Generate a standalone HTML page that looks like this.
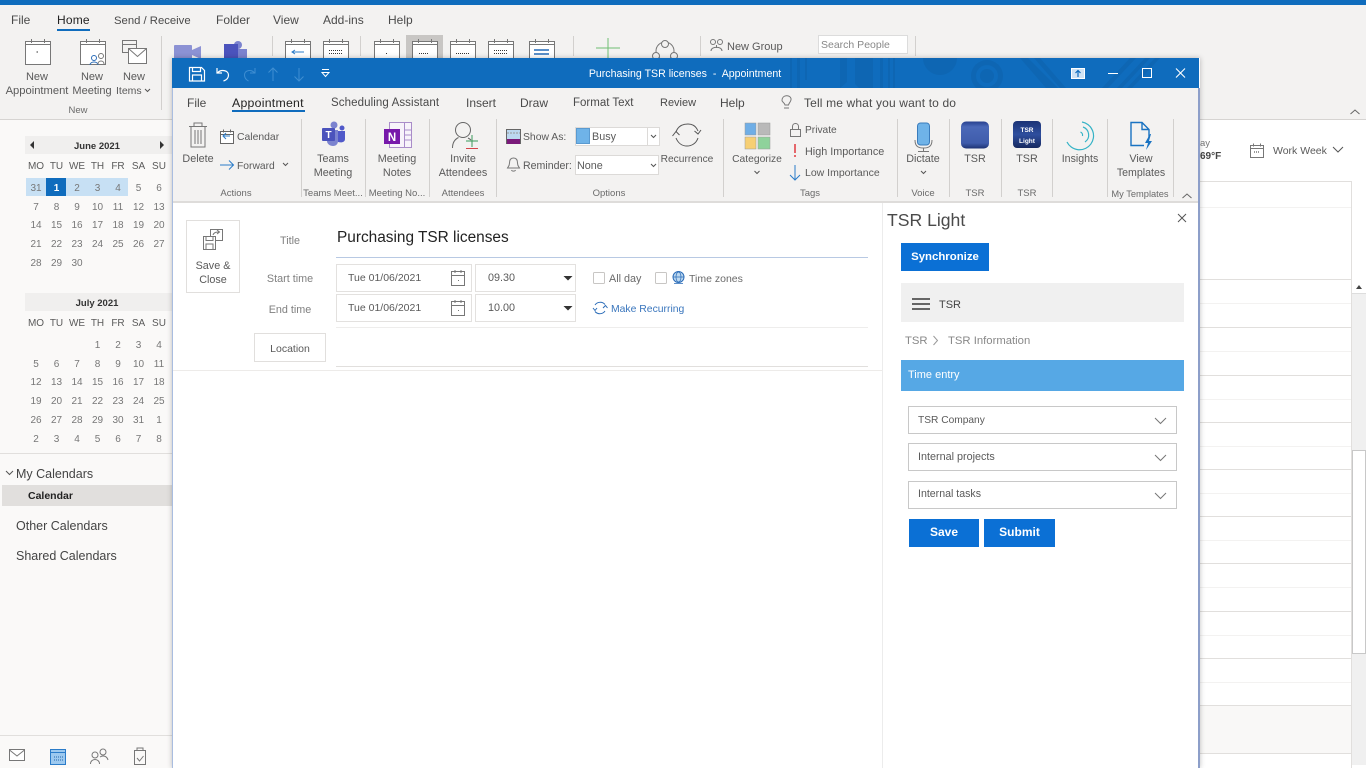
<!DOCTYPE html>
<html><head><meta charset="utf-8"><title>Purchasing TSR licenses - Appointment</title>
<style>
html,body{margin:0;padding:0;width:1366px;height:768px;overflow:hidden;background:#fff}
#w{position:absolute;left:0;top:0;width:1366px;height:768px;overflow:hidden;filter:blur(.3px);font-family:"Liberation Sans",sans-serif;font-size:10.8px;color:#5a5a5a}
.a{position:absolute}
.t{position:absolute;white-space:nowrap;line-height:14px;height:14px;margin-top:2px}
.c{transform:translateX(-50%)}
.m{font-size:11.5px;color:#4a4a4a}
.g{font-size:9.5px;color:#6a6a6a}
.grid{position:absolute;left:25.75px;width:143.5px;display:grid;grid-template-columns:repeat(7,20.5px);text-align:center;font-size:10px;color:#777}
.grid span{height:18.8px;line-height:18.8px;white-space:nowrap}
.wk{color:#5a5a5a;font-size:10px}
svg{position:absolute;left:0;top:0;overflow:visible}
.btn{position:absolute;background:#0b70d5;color:#fff;font-weight:bold;font-size:11.5px;text-align:center;box-sizing:border-box}
.sel{position:absolute;left:908px;width:269px;height:28px;box-sizing:border-box;border:1px solid #c8c8c8;background:#fff}
</style></head><body><div id="w">

<!-- background app -->
<div class="a" style="left:0;top:0;width:1366px;height:119px;background:#f3f2f1;border-bottom:1px solid #d6d4d2"></div>
<div class="a" style="left:0;top:0;width:1366px;height:5px;background:#0f6cbd"></div>
<div class="a" style="left:0;top:120px;width:172px;height:648px;background:#faf9f8"></div>
<div class="a" style="left:406px;top:35px;width:37px;height:25px;background:#c8c6c4"></div>

<span class="t m" style="left:11px;top:11px;font-size:12px">File</span>
<span class="t m" style="left:57px;top:11px;color:#222;font-size:12px;letter-spacing:.2px">Home</span>
<div class="a" style="left:57px;top:29px;width:33px;height:2px;background:#0f6cbd"></div>
<span class="t m" style="left:114px;top:12px;font-size:11.3px">Send / Receive</span>
<span class="t m" style="left:216px;top:11px;font-size:12px">Folder</span>
<span class="t m" style="left:273px;top:11px;font-size:12px">View</span>
<span class="t m" style="left:323px;top:11px;font-size:12px">Add-ins</span>
<span class="t m" style="left:388px;top:11px;font-size:12px">Help</span>

<span class="t c" style="left:37px;top:68px;font-size:11px">New</span>
<span class="t c" style="left:37px;top:82px;font-size:11.2px">Appointment</span>
<span class="t c" style="left:92px;top:68px;font-size:11px">New</span>
<span class="t c" style="left:92px;top:82px;font-size:11px">Meeting</span>
<span class="t c" style="left:134px;top:68px;font-size:11px">New</span>
<span class="t" style="left:116px;top:82px;font-size:10.5px">Items</span>
<span class="t c g" style="left:78px;top:102px">New</span>
<span class="t" style="left:727px;top:38px;font-size:11px">New Group</span>
<div class="a" style="left:818px;top:35px;width:90px;height:19px;box-sizing:border-box;border:1px solid #dcdcdc;background:#fff;padding-left:2px;line-height:19px;color:#888;font-size:10.5px">Search People</div>

<svg width="1366" height="768" fill="none" stroke="#777" stroke-width="1">
<defs>
<g id="cal"><rect x=".5" y="3.500" width="25" height="23" fill="#fff"/><path d="M.5 6.500h25M6.500 1v4M19.500 1v4"/></g>
<g id="calw"><rect x=".5" y="3.500" width="13" height="12" fill="#fff"/><path d="M.5 6.500h13M3.500 1.500v3M10.500 1.500v3"/></g>
</defs>
<g stroke="#d2d0ce"><path d="M161.500 36v74M272.500 36v20M360.500 36v20M573.500 36v20M700.500 36v20M915.500 36v20"/></g>
<use href="#cal" x="25" y="38"/><path d="M36.500 52h1.500" stroke="#333"/>
<use href="#cal" x="80" y="38"/>
<g stroke="#2b6cb8"><circle cx="94" cy="58" r="2.500" fill="#fff"/><path d="M90 65c0-4 8-4 8 0"/></g>
<circle cx="101" cy="56" r="2.500" fill="#fff"/><path d="M98 64c0-4 6-4 6 0" fill="#fff"/>
<rect x="122.500" y="40.500" width="14" height="12" fill="#f3f2f1"/><path d="M122.500 44.500h14"/>
<rect x="128.500" y="48.500" width="18" height="15" fill="#fff"/><path d="M128.500 48.500l9 8 9-8"/>
<rect x="174" y="45" width="18" height="14" rx="1" fill="#8c92d4" stroke="none"/><path d="M192 50l9-4v13l-9-4z" fill="#8c92d4" stroke="none"/>
<circle cx="238" cy="45" r="4" fill="#7b83cf" stroke="none"/><rect x="224" y="44" width="14" height="14" fill="#4b53bc" stroke="none"/><rect x="238" y="49" width="9" height="10" fill="#7b83cf" stroke="none"/>
<use href="#cal" x="285" y="38"/><use href="#cal" x="323" y="38"/>
<use href="#cal" x="374" y="38"/><use href="#cal" x="412" y="38"/><use href="#cal" x="450" y="38"/><use href="#cal" x="488" y="38"/><use href="#cal" x="529" y="38"/>
<g stroke="#333" stroke-dasharray="1 1"><path d="M329 50.500h13M329 53.500h13M419 53.500h10M456 53.500h14M494 50.500h14M494 53.500h14"/><path d="M386 53.500h1"/></g>
<path d="M534 50h15M534 54h15" stroke="#5a8fc9" stroke-width="2"/>
<path d="M292 52h12M295 50l-3 2 3 2" stroke="#2b7cc9"/>
<path d="M596 48h24M608 38v20" stroke="#6fbf73"/>
<circle cx="665" cy="51" r="9"/><circle cx="665" cy="44" r="3.500" fill="#f3f2f1"/><circle cx="656" cy="56" r="3.500" fill="#f3f2f1"/><circle cx="674" cy="56" r="3.500" fill="#f3f2f1"/>
<circle cx="713" cy="42" r="2.500"/><circle cx="720" cy="42" r="2.500"/><path d="M711 51c0-5 11-5 11 0M716.500 45v3"/>
<path d="M145 89l2.500 2.500 2.500-2.500" stroke="#555"/>
<path d="M1350.500 114l4.500-4 4.500 4" stroke="#666"/>
<!-- left nav bottom -->
<path d="M0 453.500h172M0 735.500h172" stroke="#e1dfdd"/>
<path d="M6 471l3.500 3.500 3.500-3.500" stroke="#555"/>
<rect x="9.500" y="749.500" width="15" height="11" fill="#fff"/><path d="M9.500 750l7.500 6 7.500-6"/>
<rect x="50.500" y="749.500" width="15" height="15" fill="#9dc9ef" stroke="#2b7cc9"/><path d="M50.500 752.500h15" stroke="#2b7cc9"/><path d="M54 757h9M54 760h9" stroke="#2468ad" stroke-dasharray="1 1"/>
<circle cx="95" cy="755" r="3" fill="#faf9f8"/><path d="M90.500 764c0-6 9-6 9 0"/><circle cx="103" cy="752" r="3" fill="#faf9f8"/><path d="M100 757c3-2 7-1 8 3"/>
<rect x="134.500" y="750.500" width="11" height="14" fill="#faf9f8"/><path d="M137 750v-2h6v2M137 758l2.500 3 4-5"/>
<!-- right side -->
<use href="#calw" x="1250" y="142"/><path d="M1254 152h6" stroke="#333" stroke-dasharray="1 1"/>
<path d="M1333 147l5 5 5-5" stroke="#555"/>
<g stroke="#e1dfdd"><path d="M1199 181.500h152M1199 279.500h152M1199 327.500h152M1199 375.500h152M1199 422.500h152M1199 469.500h152M1199 516.500h152M1199 563.500h152M1199 611.500h152M1199 658.500h152M1199 705.500h152M1199 753.500h152M1351.500 181v587"/></g>
<g stroke="#f3f2f1"><path d="M1199 207.500h152M1199 303.500h152M1199 351.500h152M1199 399.500h152M1199 446.500h152M1199 493.500h152M1199 540.500h152M1199 587.500h152M1199 635.500h152M1199 682.500h152"/></g>
</svg>
<div class="a" style="left:1199px;top:706px;width:152px;height:47px;background:#f9f8f7"></div>
<div class="a" style="left:1352px;top:280px;width:14px;height:488px;background:#f0f0f0"></div>
<div class="a" style="left:1352px;top:280px;width:14px;height:14px;background:#fff;border-bottom:1px solid #ddd;box-sizing:border-box"></div>
<div class="a" style="left:1352px;top:450px;width:14px;height:204px;background:#fff;border:1px solid #c8c8c8;box-sizing:border-box"></div>
<div class="a" style="left:1356px;top:285px;border:3px solid transparent;border-bottom:4px solid #444;border-top:0"></div>
<div class="a" style="left:1352px;top:765px;width:14px;height:3px;background:#fff"></div>
<span class="t" style="left:1200px;top:135px;font-size:9.500px;color:#777">ay</span>
<span class="t" style="left:1200px;top:148px;font-size:10px;font-weight:bold;color:#444">69°F</span>
<span class="t" style="left:1273px;top:142px;color:#5a5a5a;font-size:10.5px">Work Week</span>

<!-- mini calendars -->
<div class="a" style="left:25px;top:136px;width:147px;height:18px;background:#f0efee"></div>
<div class="a" style="left:25px;top:293px;width:147px;height:18px;background:#f0efee"></div>
<div class="a" style="left:26px;top:178px;width:102px;height:18px;background:#c7e0f4"></div>
<div class="a" style="left:46px;top:178px;width:20px;height:18px;background:#0f6cbd"></div>
<span class="t c" style="left:97px;top:138px;font-size:9.500px;font-weight:bold;color:#333">June 2021</span>
<span class="t c" style="left:97px;top:295px;font-size:9.500px;font-weight:bold;color:#333">July 2021</span>
<div class="a" style="left:30px;top:141px;border:4px solid transparent;border-right:4px solid #333;border-left:0"></div>
<div class="a" style="left:160px;top:141px;border:4px solid transparent;border-left:4px solid #333;border-right:0"></div>
<div class="grid" style="top:158px">
<span class="wk">MO</span><span class="wk">TU</span><span class="wk">WE</span><span class="wk">TH</span><span class="wk">FR</span><span class="wk">SA</span><span class="wk">SU</span>
<span style="margin-top:3px">31</span><span style="margin-top:3px;color:#fff;font-weight:bold">1</span><span style="margin-top:3px">2</span><span style="margin-top:3px">3</span><span style="margin-top:3px">4</span><span style="margin-top:3px">5</span><span style="margin-top:3px">6</span>
<span>7</span><span>8</span><span>9</span><span>10</span><span>11</span><span>12</span><span>13</span>
<span>14</span><span>15</span><span>16</span><span>17</span><span>18</span><span>19</span><span>20</span>
<span>21</span><span>22</span><span>23</span><span>24</span><span>25</span><span>26</span><span>27</span>
<span>28</span><span>29</span><span>30</span>
</div>
<div class="grid" style="top:315px">
<span class="wk">MO</span><span class="wk">TU</span><span class="wk">WE</span><span class="wk">TH</span><span class="wk">FR</span><span class="wk">SA</span><span class="wk">SU</span>
<span style="margin-top:3px"></span><span style="margin-top:3px"></span><span style="margin-top:3px"></span><span style="margin-top:3px">1</span><span style="margin-top:3px">2</span><span style="margin-top:3px">3</span><span style="margin-top:3px">4</span>
<span>5</span><span>6</span><span>7</span><span>8</span><span>9</span><span>10</span><span>11</span>
<span>12</span><span>13</span><span>14</span><span>15</span><span>16</span><span>17</span><span>18</span>
<span>19</span><span>20</span><span>21</span><span>22</span><span>23</span><span>24</span><span>25</span>
<span>26</span><span>27</span><span>28</span><span>29</span><span>30</span><span>31</span><span>1</span>
<span>2</span><span>3</span><span>4</span><span>5</span><span>6</span><span>7</span><span>8</span>
</div>
<span class="t" style="left:16px;top:465px;font-size:12.500px;color:#444">My Calendars</span>
<div class="a" style="left:2px;top:485px;width:170px;height:21px;background:#e1dfdd"></div>
<span class="t" style="left:28px;top:487px;font-size:10.500px;font-weight:bold;color:#222">Calendar</span>
<span class="t" style="left:16px;top:517px;font-size:12.500px;color:#444">Other Calendars</span>
<span class="t" style="left:16px;top:547px;font-size:12.500px;color:#444">Shared Calendars</span>

<!-- appointment window -->
<div class="a" style="left:172px;top:58px;width:1028px;height:710px;background:#fff;box-shadow:0 0 5px rgba(0,0,0,.25)"></div>
<div class="a" style="left:172px;top:58px;width:1027px;height:30px;background:#0f6cbd;overflow:hidden"></div>
<div class="a" style="left:172px;top:88px;width:1027px;height:113px;background:#f3f2f1"></div>
<div class="a" style="left:172px;top:201px;width:1027px;height:2px;background:#dedcda"></div>
<div class="a" style="left:172px;top:88px;width:1px;height:680px;background:#a9bde0"></div>
<div class="a" style="left:1198px;top:88px;width:2px;height:680px;background:#8d9fc9"></div>

<svg width="1366" height="768" fill="none" stroke="#666" stroke-width="1">
<defs><clipPath id="tb"><rect x="172" y="58" width="1027" height="30"/></clipPath></defs>
<!-- title pattern -->
<g clip-path="url(#tb)" fill="#0e66b3" stroke="none">
<path d="M790 58h2v30h-2zM797 58h3v30h-3zM805 58h2v22h-2zM840 58h7v24l-7 6zM855 58h18v30h-14l-4-4zM880 58h3v30h-3zM888 58h2v30h-2zM893 58h2v30h-2z"/>
<circle cx="940" cy="58" r="17"/>
<circle cx="987" cy="76" r="16"/><circle cx="987" cy="76" r="11" fill="#0f6cbd"/><circle cx="987" cy="76" r="7"/>
<path d="M1020 58h8l30 30h-12zM1034 58h6l26 30h-6zM1130 58l-28 30h6l28-30zM1145 58l-28 30h5l28-30zM1155 58l-28 30h5l28-30z"/>
</g>
<!-- QAT -->
<g stroke="#fff" stroke-width="1.200">
<path d="M189.500 67.500h12l3 3v10.500h-15zM192.500 67.500v4h8v-4M192.500 81v-6h9v6"/>
<path d="M217 68v5h5M217.500 73c3-4 11-3 11 2 0 3-2 5-5 6"/>
</g>
<g stroke="#3f8ed2" stroke-width="1">
<path d="M255 68v5h-5M254.500 73c-3-4-10-3-10 2 0 3 2 5 4 6"/>
<path d="M273 81V68M268.500 72.500L273 68l4.500 4.500M299 68v13M294.500 76.500L299 81l4.500-4.500"/>
</g>
<path d="M322 69.500h7M322 72.500h7l-3.500 4z" stroke="#fff"/>
<rect x="1071.500" y="68.500" width="13" height="10" fill="#cfe3f5" stroke="#fff"/><path d="M1078 77v-6M1075.500 73l2.500-2.500 2.500 2.500" stroke="#0f6cbd" stroke-width="1.200"/>
<path d="M1108 73.500h10" stroke="#fff"/>
<rect x="1142.500" y="68.500" width="9" height="9" stroke="#fff"/>
<path d="M1176 68.500l9 9M1185 68.500l-9 9" stroke="#fff" stroke-width="1.100"/>
<!-- seps -->
<g stroke="#d2d0ce"><path d="M301.500 119v78M365.500 119v78M429.500 119v78M496.500 119v78M723.500 119v78M897.500 119v78M949.500 119v78M1001.500 119v78M1052.500 119v78M1107.500 119v78M1173.500 119v78"/></g>
<!-- bulb -->
<path d="M782 101c0-6 8-6 9-2 .5 3-2 4-2.500 6.500h-3.500c-.5-2.500-3-3-3-4.500zM784 108.500h5" stroke="#777" transform="translate(0,-.5)"/>
<!-- trash -->
<path d="M189 126.500h18M194 126v-3h8v3M191 127v20h14v-20M195 130v14M198 130v14M201 130v14" stroke="#777"/>
<use href="#calw" x="220" y="128"/><path d="M230 136h-7M226 133l-3 3 3 3" stroke="#2b7cc9"/>
<path d="M220 165h13M229 160.500l4.500 4.500-4.500 4.500" stroke="#2b7cc9"/>
<path d="M283 163l2.500 2.500 2.500-2.500" stroke="#555"/>
<!-- teams -->
<g stroke="none"><circle cx="334" cy="125" r="3.500" fill="#7b83cf"/><circle cx="342" cy="128" r="2.500" fill="#5059c9"/>
<path d="M327 130h11v11c0 3-2 5-5 5s-6-2-6-5z" fill="#7b83cf"/><path d="M338 131h7v8c0 3-3 4-7 3z" fill="#5059c9"/><rect x="322" y="128" width="13" height="13" rx="1" fill="#4b53bc"/></g>
<text x="328.500" y="138" fill="#fff" stroke="none" font-size="10" font-weight="bold" text-anchor="middle" font-family="Liberation Sans">T</text>
<!-- onenote -->
<rect x="389.500" y="122.500" width="22" height="25" stroke="#a98cc9" fill="#f7f3fa"/><path d="M404.500 122v25M405 130h6M405 135h6M405 140h6" stroke="#a98cc9"/>
<rect x="384" y="129" width="16" height="15" fill="#7719aa" stroke="none"/>
<text x="392" y="141" fill="#fff" stroke="none" font-size="11.500" font-weight="bold" text-anchor="middle" font-family="Liberation Sans">N</text>
<!-- invite -->
<circle cx="463" cy="130" r="7.500"/><path d="M452.500 148c0-6 3-9 6-10.500M468 138c1 .5 2 1 3 2"/>
<path d="M472 135v12M466 141h12" stroke="#3a9a5a"/><path d="M466 148.500h12" stroke="#d4454a"/>
<!-- show as -->
<rect x="506.500" y="129.500" width="14" height="14" fill="#bcd8f0" stroke="#666"/><rect x="507" y="139" width="13" height="5" fill="#7a1a7a" stroke="none"/><path d="M507 133h13" stroke="#999" stroke-dasharray="2 1"/>
<path d="M513.500 158c-3 0-4 2-4 5 0 3-1.500 4-2 5h12c-.5-1-2-2-2-5 0-3-1-5-4-5zM511.500 170c.5 1.500 3.500 1.500 4 0" stroke="#777"/>
<!-- recurrence -->
<path d="M676 132c2-6 7-8 12-8 4 0 8 2 10 7M698 138c-2 6-7 8-11 8-5 0-9-3-11-8" stroke="#555"/><path d="M672.500 136l3.500-4.500 3.500 3.500M701 130l-3 4-3.500-3" stroke="#555"/>
<!-- categorize -->
<g stroke="#999" stroke-width=".5"><rect x="745" y="123" width="11" height="12" fill="#6faee6"/><rect x="758" y="123" width="12" height="12" fill="#b9b9b9"/><rect x="745" y="137" width="11" height="12" fill="#f6cf74"/><rect x="758" y="137" width="12" height="12" fill="#8fd29b"/></g>
<path d="M754.500 171l2.500 2.500 2.500-2.500" stroke="#555"/>
<rect x="790.500" y="129.500" width="10" height="7" stroke="#777"/><path d="M792.500 129.500v-3c0-4 6-4 6 0v3" stroke="#777"/>
<path d="M795 144v9" stroke="#e0393e" stroke-width="1.500"/><path d="M795 155v2" stroke="#e0393e" stroke-width="1.500"/>
<path d="M795 165v15M790 175l5 5 5-5" stroke="#2b7cc9"/>
<!-- dictate -->
<path d="M915 140c0 7 4 8 8.500 8s8.500-1 8.500-8M923.500 148v3M918 151.500h11" stroke="#777"/>
<rect x="917.500" y="123" width="12" height="22" rx="3" fill="#6fb3e8" stroke="#3a7cbc"/>
<path d="M921 171l2.500 2.500 2.500-2.500" stroke="#555"/>
<!-- tsr buttons -->
<defs><linearGradient id="tg" x1="0" y1="0" x2="0" y2="1"><stop offset="0" stop-color="#27408f"/><stop offset=".2" stop-color="#4a68b8"/><stop offset=".8" stop-color="#3f5cab"/><stop offset="1" stop-color="#1e3373"/></linearGradient>
<linearGradient id="tg2" x1="0" y1="0" x2="0" y2="1"><stop offset="0" stop-color="#1b3375"/><stop offset=".5" stop-color="#2f4f9e"/><stop offset="1" stop-color="#16295f"/></linearGradient></defs>
<rect x="961" y="121.500" width="28" height="27" rx="5" fill="url(#tg)" stroke="none"/>
<rect x="1013" y="121" width="28" height="27" rx="4" fill="url(#tg2)" stroke="none"/>
<text x="1027" y="132" fill="#fff" stroke="none" font-size="6.500" font-weight="bold" text-anchor="middle" font-family="Liberation Sans">TSR</text>
<text x="1027" y="143" fill="#fff" stroke="none" font-size="6.500" font-weight="bold" text-anchor="middle" font-family="Liberation Sans">Light</text>
<!-- insights -->
<g stroke="#35b3c6" stroke-width="1.200"><path d="M1082 122a14 14 0 1 1-15 20"/><path d="M1083 127a8.500 8.500 0 0 1 2 15" /><path d="M1080.500 132a3.500 3.500 0 0 1 2 4"/></g>
<!-- view templates -->
<path d="M1144 145.500h-13v-23h11l7 7v8M1142 122.500v7h7" stroke="#1a73c2" stroke-width="1.400"/>
<path d="M1150 134l-5 9h3l-2 7 6-9h-3l2-7z" fill="#1a73c2" stroke="none"/>
<path d="M1182.500 198l4.500-4 4.500 4" stroke="#666"/>
<!-- save & close -->
<rect x="186.500" y="220.500" width="53" height="72" stroke="#e1dfdd"/>
<rect x="210.500" y="229.500" width="12" height="11" stroke="#777"/><rect x="203.500" y="236.500" width="12" height="13" fill="#fff" stroke="#777"/><path d="M206 236.500v4h7v-4M206 249v-5h7v5M213 235c1-3 4-3 6-3M217 230l2.500 2-2.500 2" stroke="#777"/>
<path d="M336 257.500h532" stroke="#b8c9e3"/>
<rect x="336.500" y="264.500" width="135" height="27" stroke="#e3e1df"/><rect x="475.500" y="264.500" width="100" height="27" stroke="#e3e1df"/>
<rect x="336.500" y="294.500" width="135" height="27" stroke="#e3e1df"/><rect x="475.500" y="294.500" width="100" height="27" stroke="#e3e1df"/>
<g stroke="#777"><rect x="451.500" y="271.500" width="13" height="14"/><path d="M451.500 275.500h13M455 270v3M461 270v3M458 280.500h1"/><rect x="451.500" y="301.500" width="13" height="14"/><path d="M451.500 305.500h13M455 300v3M461 300v3M458 310.500h1"/></g>
<path d="M563.500 276h9l-4.500 4.500zM563.500 306h9l-4.500 4.500z" fill="#333" stroke="none"/>
<rect x="593.500" y="272.500" width="11" height="11" stroke="#c8c6c4" rx="1"/><rect x="655.500" y="272.500" width="11" height="11" stroke="#c8c6c4" rx="1"/>
<circle cx="678.500" cy="277" r="5.500" fill="#bcd8f0" stroke="#2b6cb8"/><path d="M676 277a2.500 5 0 0 0 5 0a2.500 5 0 0 0-5 0M673.500 277h10M674 283.500h9" stroke="#2b6cb8" stroke-width=".7"/>
<path d="M595 305c2-3 7-4 10-.5M605 311c-2 3-7 4-10 .5M593 308l2 2.500 2-2.500M603 308l2.500-2.500 2 2.500" stroke="#2b6cb8"/>
<path d="M336 327.500h532" stroke="#eeedec"/>
<rect x="254.500" y="333.500" width="71" height="28" stroke="#e1dfdd"/>
<path d="M336 366.500h532" stroke="#e1dfdd"/>
<path d="M173 370.500h709" stroke="#edebe9"/>
<path d="M882.500 203v565" stroke="#ececec"/>
<path d="M1178 214l8 8M1186 214l-8 8" stroke="#555"/>
</svg>

<span class="t c" style="left:685px;top:65px;color:#fff;font-size:10.6px">Purchasing TSR licenses&nbsp; -&nbsp; Appointment</span>
<span class="t m" style="left:187px;top:94px;font-size:12px">File</span>
<span class="t m" style="left:232px;top:94px;color:#222;font-size:12.3px;letter-spacing:.25px">Appointment</span>
<div class="a" style="left:232px;top:110px;width:73px;height:2px;background:#0f6cbd"></div>
<span class="t m" style="left:331px;top:94px;letter-spacing:.1px">Scheduling Assistant</span>
<span class="t m" style="left:466px;top:94px;font-size:12px">Insert</span>
<span class="t m" style="left:520px;top:94px;font-size:12px">Draw</span>
<span class="t m" style="left:573px;top:94px;">Format Text</span>
<span class="t m" style="left:660px;top:94px;font-size:11px">Review</span>
<span class="t m" style="left:720px;top:94px;font-size:12px">Help</span>
<span class="t m" style="left:804px;top:94px;font-size:12px;letter-spacing:.15px">Tell me what you want to do</span>

<span class="t c" style="left:198px;top:150px">Delete</span>
<span class="t" style="left:237px;top:129px;font-size:10.4px">Calendar</span>
<span class="t" style="left:237px;top:158px;font-size:10.3px">Forward</span>
<span class="t c g" style="left:236px;top:185px">Actions</span>
<span class="t c" style="left:333px;top:150px">Teams</span><span class="t c" style="left:333px;top:164px">Meeting</span>
<span class="t c g" style="left:333px;top:185px">Teams Meet...</span>
<span class="t c" style="left:397px;top:150px">Meeting</span><span class="t c" style="left:397px;top:164px">Notes</span>
<span class="t c g" style="left:397px;top:185px">Meeting No...</span>
<span class="t c" style="left:463px;top:150px">Invite</span><span class="t c" style="left:463px;top:164px">Attendees</span>
<span class="t c g" style="left:463px;top:185px">Attendees</span>
<span class="t" style="left:523px;top:129px;font-size:10.4px">Show As:</span>
<span class="t" style="left:523px;top:157px;font-size:10.6px">Reminder:</span>

<div class="a" style="left:575px;top:127px;width:85px;height:19px;background:#fff;border:1px solid #dcdad8;box-sizing:border-box"></div>
<div class="a" style="left:576px;top:128px;width:14px;height:16px;background:#6fb3e8;border:1px solid #5a9ad0;box-sizing:border-box"></div>
<div class="a" style="left:647px;top:127px;width:1px;height:19px;background:#dcdad8"></div>
<span class="t" style="left:592px;top:128px">Busy</span>
<div class="a" style="left:575px;top:155px;width:84px;height:20px;background:#fff;border:1px solid #dcdad8;box-sizing:border-box"></div>
<span class="t" style="left:577px;top:157px">None</span>
<svg width="1366" height="768" fill="none" stroke="#555"><path d="M651 135l2.500 2.500 2.500-2.500M651 164l2.500 2.500 2.500-2.500"/></svg>
<span class="t c" style="left:687px;top:151px;font-size:10.2px">Recurrence</span>
<span class="t c g" style="left:609px;top:185px">Options</span>
<span class="t c" style="left:757px;top:151px;font-size:10.3px">Categorize</span>
<span class="t" style="left:805px;top:122px;font-size:10.2px">Private</span>
<span class="t" style="left:805px;top:143px">High Importance</span>
<span class="t" style="left:805px;top:164px;font-size:10.5px">Low Importance</span>
<span class="t c g" style="left:810px;top:185px">Tags</span>
<span class="t c" style="left:923px;top:150px">Dictate</span>
<span class="t c g" style="left:923px;top:185px">Voice</span>
<span class="t c" style="left:975px;top:150px">TSR</span><span class="t c g" style="left:975px;top:185px">TSR</span>
<span class="t c" style="left:1027px;top:150px">TSR</span><span class="t c g" style="left:1027px;top:185px">TSR</span>
<span class="t c" style="left:1080px;top:150px;font-size:10.6px">Insights</span>
<span class="t c" style="left:1141px;top:150px">View</span><span class="t c" style="left:1141px;top:164px;font-size:10.6px">Templates</span>
<span class="t c g" style="left:1140px;top:185px;font-size:9.300px">My Templates</span>

<!-- form -->
<span class="t c" style="left:213px;top:257px">Save &amp;</span>
<span class="t c" style="left:213px;top:271px">Close</span>
<span class="t c" style="left:290px;top:232px;color:#808080">Title</span>
<span class="t" style="left:337px;top:227px;height:18px;line-height:18px;font-size:15.400px;color:#222">Purchasing TSR licenses</span>
<span class="t c" style="left:290px;top:270px;color:#808080">Start time</span>
<span class="t c" style="left:290px;top:301px;color:#808080">End time</span>
<span class="t" style="left:348px;top:269px;font-size:10.5px">Tue 01/06/2021</span>
<span class="t" style="left:488px;top:269px">09.30</span>
<span class="t" style="left:348px;top:299px;font-size:10.5px">Tue 01/06/2021</span>
<span class="t" style="left:488px;top:299px">10.00</span>
<span class="t" style="left:609px;top:270px;color:#6a6a6a">All day</span>
<span class="t" style="left:689px;top:270px;color:#6a6a6a;font-size:10.5px">Time zones</span>
<span class="t" style="left:611px;top:301px;color:#3a76bd;font-size:10.4px">Make Recurring</span>
<span class="t c" style="left:290px;top:340px;font-size:10.5px">Location</span>

<!-- task pane -->
<span class="t" style="left:887px;top:207px;height:22px;line-height:22px;font-size:17.600px;color:#4a4a4a">TSR Light</span>
<div class="btn" style="left:901px;top:243px;width:88px;height:28px;line-height:28px;font-size:11.4px">Synchronize</div>
<div class="a" style="left:901px;top:283px;width:283px;height:39px;background:#f0f0f0"></div>
<div class="a" style="left:912px;top:298px;width:18px;height:2px;background:#666"></div>
<div class="a" style="left:912px;top:303px;width:18px;height:2px;background:#666"></div>
<div class="a" style="left:912px;top:308px;width:18px;height:2px;background:#666"></div>
<span class="t" style="left:939px;top:296px;font-size:11px;color:#444">TSR</span>
<span class="t" style="left:905px;top:332px;font-size:11.3px;color:#888">TSR</span>
<svg width="1366" height="768" fill="none" stroke="#999"><path d="M933.500 336l4 4.500-4 4.500"/></svg>
<span class="t" style="left:948px;top:332px;font-size:11.3px;color:#888">TSR Information</span>
<div class="a" style="left:901px;top:360px;width:283px;height:31px;background:#56a8e5"></div>
<span class="t" style="left:908px;top:366px;color:#fff;font-size:11px">Time entry</span>
<div class="sel" style="top:406px"></div><div class="sel" style="top:443px"></div><div class="sel" style="top:481px"></div>
<span class="t" style="left:918px;top:412px;color:#5a5a5a;font-size:10.2px">TSR Company</span>
<span class="t" style="left:918px;top:448px;color:#5a5a5a;font-size:10.8px">Internal projects</span>
<span class="t" style="left:918px;top:485px;color:#5a5a5a;font-size:10.6px">Internal tasks</span>
<svg width="1366" height="768" fill="none"><g stroke="#777"><path d="M1155 418l5.500 5.500 5.500-5.500M1155 455l5.500 5.500 5.500-5.500M1155 493l5.500 5.500 5.500-5.500"/></g></svg>
<div class="btn" style="left:909px;top:519px;width:70px;height:28px;line-height:27px;font-size:12px">Save</div>
<div class="btn" style="left:984px;top:519px;width:71px;height:28px;line-height:27px;font-size:12px">Submit</div>
</div></body></html>
